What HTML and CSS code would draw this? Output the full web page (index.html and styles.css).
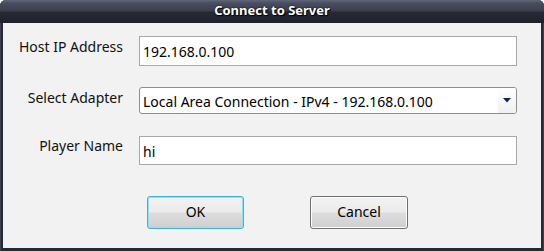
FILE: index.html
```html
<!DOCTYPE html>
<html>
<head>
<meta charset="utf-8">
<link rel="stylesheet" href="styles.css">
</head>
<body>
<div class="window">
  <div class="titlebar">Connect to Server</div>
  <div class="client">
    <div class="form">
      <div class="label">Host IP Address</div>
      <div class="field text">192.168.0.100</div>
      <div class="label">Select Adapter</div>
      <div class="field combo">
        <span class="combo-text">Local Area Connection - IPv4 - 192.168.0.100</span>
        <span class="combo-btn"><svg width="8" height="5" viewBox="0 0 8 5"><path d="M0 0H8L4 4.5Z" fill="#1b1f5e"/></svg></span>
      </div>
      <div class="label">Player Name</div>
      <div class="field text">hi</div>
    </div>
    <div class="buttons">
      <div class="btn default">OK</div>
      <div class="btn">Cancel</div>
    </div>
  </div>
</div>
</body>
</html>
```

FILE: styles.css
```css
html, body {
  margin: 0;
  padding: 0;
  background: #ffffff;
}
body {
  font-family: "Noto Sans", "Open Sans", sans-serif;
}
.window {
  width: 544px;
  height: 251px;
  box-sizing: border-box;
  background: #262934;
  border-radius: 6px 6px 0 0;
  padding: 0 3px 3px 3px;
  display: flex;
  flex-direction: column;
  box-shadow: inset 1px 0 0 #3c4050, inset -1px 0 0 #3c4050;
}
.titlebar {
  height: 23px;
  margin: 0 -3px;
  border-radius: 6px 6px 0 0;
  background: linear-gradient(#60667a 0px, #4a4f60 3px, #3a3e4d 11px, #272a35 12px, #1f222b 23px);
  color: #ffffff;
  font-weight: bold;
  font-size: 13px;
  line-height: 21px;
  text-align: center;
  text-shadow: 0 0 2px #000, 1px 1px 1px #000;
  flex: none;
}
.client {
  flex: 1;
  background: #f2f2f2;
  display: flex;
  flex-direction: column;
}
.form {
  display: grid;
  grid-template-columns: 120px 378px;
  grid-template-rows: 30px 27px 30px;
  column-gap: 16px;
  row-gap: 21px;
  padding-top: 13px;
}
.form > .label:nth-of-type(5) { }
.label {
  text-align: right;
  font-size: 14px;
  line-height: 17px;
  padding-top: 2px;
  color: #111;
}
.field {
  box-sizing: border-box;
  background: #fff;
  border: 1px solid #a9a9a9;
  font-size: 14px;
  color: #000;
}
.text {
  padding: 6px 4px 0 3px;
  line-height: 17px;
}
.combo {
  border-radius: 3px;
  border-color: #8d8d8d;
  display: flex;
  align-items: center;
}
.combo-text {
  flex: 1;
  padding-left: 3px;
  line-height: 17px;
  padding-top: 2px;
}
.combo-btn {
  width: 18px;
  align-self: stretch;
  background: linear-gradient(#ffffff, #f0f0f0);
  display: flex;
  align-items: center;
  justify-content: center;
  border-radius: 0 2px 2px 0;
}
.form .field:nth-child(6) { margin-top: 1px; }
.buttons {
  display: flex;
  gap: 66px;
  padding-left: 144px;
  margin-top: 31px;
}
.btn {
  box-sizing: border-box;
  width: 98px;
  height: 33px;
  border: 1px solid #707070;
  border-radius: 3px;
  background: linear-gradient(#f2f2f2 0%, #ebebeb 48%, #dddddd 52%, #cfcfcf 100%);
  box-shadow: inset 0 0 0 1px #fcfcfc;
  text-align: center;
  font-size: 14px;
  line-height: 30px;
  color: #000;
}
.btn.default {
  width: 97px;
  border-color: #3cb5d8;
  box-shadow: inset 0 0 0 1px #8ee0f7;
}
```
